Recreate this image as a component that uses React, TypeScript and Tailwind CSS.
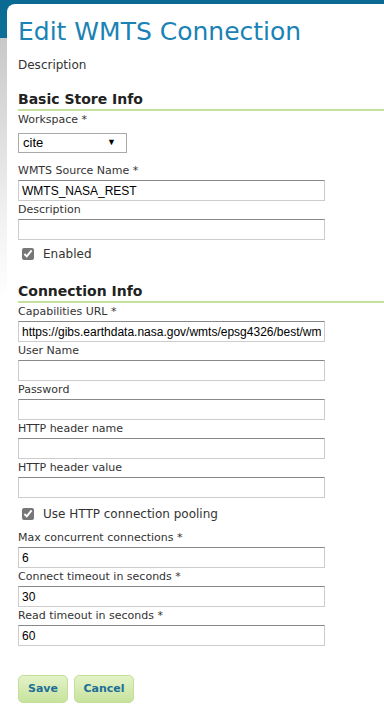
import { ChangeEvent, useState } from "react";

const label = "block text-[11px] leading-[18px] text-[#333] font-['DejaVu_Sans',Verdana,sans-serif]";
const input =
  "block h-[21px] w-[307px] border border-[#ccc] border-t-[#888] bg-white px-[3px] text-[12px] text-black font-['Liberation_Sans',Arial,sans-serif] outline-none";

function Field({ name, value = "" }: { name: string; value?: string }) {
  const [v, setV] = useState(value);
  return (
    <div>
      <label className={label}>{name}</label>
      <input
        className={input}
        value={v}
        onChange={(e: ChangeEvent<HTMLInputElement>) => setV(e.target.value)}
      />
    </div>
  );
}

function Check({ text }: { text: string }) {
  return (
    <label className="flex items-center gap-[9px] pl-[4px] text-[12px] text-[#333] font-['DejaVu_Sans',Verdana,sans-serif]">
      <input type="checkbox" defaultChecked className="h-[12px] w-[12px] accent-[#777]" />
      {text}
    </label>
  );
}

function Heading({ text }: { text: string }) {
  return (
    <h2 className="border-b-2 border-[#c5e29c] text-[14px] font-bold leading-[20px] text-[#222] font-['DejaVu_Sans',Verdana,sans-serif]">
      {text}
    </h2>
  );
}

export default function App() {
  return (
    <div className="min-h-[720px] w-[384px] overflow-hidden bg-[linear-gradient(to_bottom,#0b6a92_0px,#0d6f97_38px,#c8c8c8_38px,#f2f2f2_220px,#fff_300px)]">
      <div className="ml-[7px] mt-[4px] min-h-[716px] rounded-tl-[8px] bg-white pl-[11px] pb-4">
        <h1 className="pt-[13px] text-[25px] leading-[30px] text-[#1a82b5] font-['DejaVu_Sans',Verdana,sans-serif]">
          Edit WMTS Connection
        </h1>
        <p className="mt-[10px] text-[12px] leading-[16px] text-[#333] font-['DejaVu_Sans',Verdana,sans-serif]">
          Description
        </p>

        <div className="mt-[16px]">
          <Heading text="Basic Store Info" />
          <label className={label}>Workspace *</label>
          <div className="mt-[4px] mb-[9px] flex h-[20px] w-[109px] items-center justify-between border border-[#aaa] pl-[4px] pr-[10px] text-[13px] text-black font-['Liberation_Sans',Arial,sans-serif]">
            <span>cite</span>
            <span className="text-[9px]">▼</span>
          </div>
          <Field name="WMTS Source Name *" value="WMTS_NASA_REST" />
          <Field name="Description" />
          <div className="mt-[5px]">
            <Check text="Enabled" />
          </div>
        </div>

        <div className="mt-[18px]">
          <Heading text="Connection Info" />
          <Field name="Capabilities URL *" value="https://gibs.earthdata.nasa.gov/wmts/epsg4326/best/wmts.cgi" />
          <Field name="User Name" />
          <Field name="Password" />
          <Field name="HTTP header name" />
          <Field name="HTTP header value" />
          <div className="mt-[7px] mb-[6px]">
            <Check text="Use HTTP connection pooling" />
          </div>
          <Field name="Max concurrent connections *" value="6" />
          <Field name="Connect timeout in seconds *" value="30" />
          <Field name="Read timeout in seconds *" value="60" />
        </div>

        <div className="mt-[29px] flex gap-[6px]">
          <button className="h-[28px] w-[50px] rounded-[5px] border border-[#c2df98] bg-[linear-gradient(to_bottom,#e3f2c8,#c7e39d)] text-[11px] font-bold text-[#1d6f98] font-['DejaVu_Sans',Verdana,sans-serif]">
            Save
          </button>
          <button className="h-[28px] w-[60px] rounded-[5px] border border-[#c2df98] bg-[linear-gradient(to_bottom,#e3f2c8,#c7e39d)] text-[11px] font-bold text-[#1d6f98] font-['DejaVu_Sans',Verdana,sans-serif]">
            Cancel
          </button>
        </div>
      </div>
    </div>
  );
}
